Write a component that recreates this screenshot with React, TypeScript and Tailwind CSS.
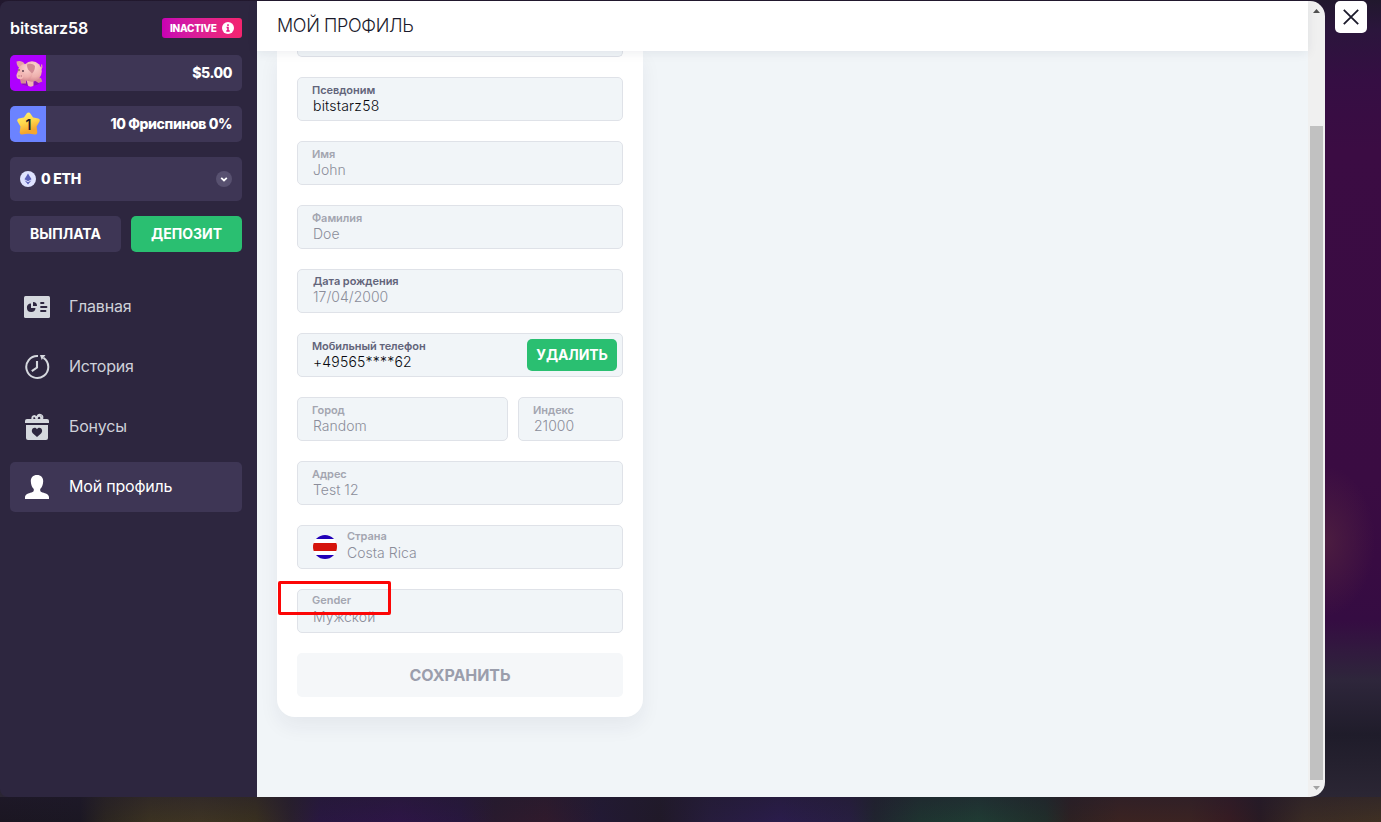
import type { ReactNode } from 'react';

function PiggyIcon() {
  return (
    <svg viewBox="0 0 36 36" className="size-9 shrink-0">
      <defs>
        <radialGradient id="pig" cx="60%" cy="25%" r="85%">
          <stop offset="0" stopColor="#fbd3cf" />
          <stop offset="0.6" stopColor="#eeb0ad" />
          <stop offset="1" stopColor="#c97784" />
        </radialGradient>
      </defs>
      <rect width="36" height="36" fill="#ae00ff" />
      <path d="M30 14c2-.5 2.200-2 1.500-4.500" stroke="#e89fa6" strokeWidth="1.200" fill="none" />
      <ellipse cx="20" cy="28" rx="9" ry="3" fill="#8d10bd" />
      <path d="M10 24h6v4.500h-5zM26 22l5 1 1.300 3.500-3.800 1.500-3-2z" fill="#d68c93" />
      <path d="M16.500 25h7v5.500c-1 1.500-4.500 1.500-5.500 0z" fill="#f0b4b2" />
      <path d="M6.500 6.500c3-1.500 6.500 0 8 2l-3 5.500c-3-1-5-3.500-5-7.500z" fill="#e6a0a6" />
      <ellipse cx="22" cy="16.500" rx="9.800" ry="10.200" fill="url(#pig)" />
      <ellipse cx="15" cy="17.500" rx="7.500" ry="8.500" fill="url(#pig)" />
      <path d="M17 9.500c3-1.500 6.500-.5 8 1.500 0 3-1 6-3 7.500-2.500-3-5-3.500-5-9z" fill="#d08b93" />
      <ellipse cx="10" cy="20.500" rx="3.500" ry="3.800" fill="#f3b7b5" />
      <circle cx="9" cy="21" r=".7" fill="#b5707c" />
      <circle cx="11.300" cy="21" r=".7" fill="#b5707c" />
      <circle cx="13" cy="16" r=".9" fill="#503445" />
      <circle cx="9" cy="15" r=".8" fill="#503445" />
    </svg>
  );
}

function StarIcon() {
  return (
    <svg viewBox="0 0 36 36" className="size-9 shrink-0">
      <defs>
        <linearGradient id="star" x1="0" y1="0" x2="0.300" y2="1">
          <stop offset="0" stopColor="#ffed66" />
          <stop offset="0.500" stopColor="#ffd84c" />
          <stop offset="1" stopColor="#f5a62c" />
        </linearGradient>
      </defs>
      <rect width="36" height="36" fill="#6b83ff" />
      <path
        d="M18.500 8.500l3.300 4.700 6 1.300-3.300 5.500.8 6.500-6.800-1-6.800 1 .8-6.500-3.300-5.500 6-1.300z"
        fill="url(#star)"
        stroke="url(#star)"
        strokeWidth="4"
        strokeLinejoin="round"
      />
      <text x="18.500" y="24" textAnchor="middle" fontSize="14" fontWeight="600" fill="#1b1b2b" fontFamily="Inter, sans-serif">
        1
      </text>
    </svg>
  );
}

function DashboardIcon() {
  return (
    <svg viewBox="0 0 26 22" className="h-[22px] w-[26px]">
      <rect width="26" height="22" rx="1.500" fill="#d5d8de" />
      <path d="M7 7.500v4.500h4.500A4.300 4.300 0 1 1 7 7.500z" fill="#2d263f" />
      <path d="M9 6a4 4 0 0 1 4 4H9z" fill="#2d263f" />
      <path d="M17 7h2.500M17 11h5.500M17 15h4.500" stroke="#2d263f" strokeWidth="1.800" strokeLinecap="round" />
    </svg>
  );
}

function HistoryIcon() {
  return (
    <svg viewBox="0 0 26 26" className="size-[26px]" fill="none" stroke="#d5d8de" strokeWidth="2">
      <path d="M14 2a11 11 0 1 0 5.500 1.900" />
      <path d="M13 7v6.500L7.800 17.200" strokeWidth="2.100" />
      <path d="M16 1h5.500l-3.800 5z" fill="#d5d8de" stroke="none" />
    </svg>
  );
}

function BonusIcon() {
  return (
    <svg viewBox="0 0 26 28" className="h-7 w-[26px]">
      <path d="M8.500 7c-1-5 3-5 4-1 1-5 6-4 4.500 1" fill="none" stroke="#d5d8de" strokeWidth="2" />
      <path d="M13 6c-1-4 2-5.500 4.500-4 1.500 1 1.500 3 .5 5" fill="none" stroke="#d5d8de" strokeWidth="1.300" />
      <path d="M3 6h20q2 0 2 2v2H1V8q0-2 2-2z" fill="#d5d8de" />
      <path d="M2 12h22V25q0 2-2 2H4q-2 0-2-2z" fill="#d5d8de" />
      <path d="M13 24l-4-3.500c-3.300-3.500 1.200-8 4-4.300 2.800-3.700 7.300.8 4 4.300z" fill="#2d263f" />
    </svg>
  );
}

function ProfileIcon() {
  return (
    <svg viewBox="0 0 26 26" className="size-[26px]" fill="#fff">
      <path d="M13 1c4 0 6.300 2.600 6.200 6.300-.1 3.700-1.400 6.200-3 7.700-.2 2.200.5 3 2.300 3.600 3.300 1 6 1.600 6.500 4.400v2H1v-2c.5-2.800 3.200-3.400 6.500-4.400 1.800-.6 2.500-1.400 2.300-3.600-1.600-1.500-2.900-4-3-7.700C6.700 3.600 9 1 13 1z" />
    </svg>
  );
}

function NavItem({ icon, label, active }: { icon: ReactNode; label: string; active?: boolean }) {
  return (
    <a
      className={`flex h-[50px] items-center rounded-[5px] pl-3.5 text-base tracking-[-0.2px] ${
        active ? 'bg-[#3e3655] text-white' : 'text-[#cfd1d9]'
      }`}
    >
      <span className="flex w-[45px] items-center">{icon}</span>
      <span className="pb-0.5">{label}</span>
    </a>
  );
}

function Sidebar() {
  return (
    <aside className="flex w-[257px] shrink-0 flex-col rounded-l-[8px] bg-[#2d263f] pt-4 pr-[15px] pl-2.5 text-white">
      <div className="flex h-[22px] items-center justify-between">
        <span className="text-base font-semibold tracking-[-0.1px]">bitstarz58</span>
        <span className="flex h-5 w-20 items-center gap-[5px] rounded-[3px] bg-linear-to-r from-[#c800b4] to-[#f4246e] pl-2 text-[10px] font-extrabold tracking-[-0.25px]">
          INACTIVE
          <svg viewBox="0 0 12 12" className="size-3">
            <circle cx="6" cy="6" r="6" fill="#fff" />
            <path d="M6 2.200v1.800M4.600 5.500H6V9M4.300 9h3.400" stroke="#e8107f" strokeWidth="1.500" fill="none" />
          </svg>
        </span>
      </div>
      <div className="mt-4 flex h-9 items-center justify-between overflow-hidden rounded-[5px] bg-[#3e3655] pr-2.5">
        <PiggyIcon />
        <span className="text-sm font-extrabold tracking-[-0.45px]">$5.00</span>
      </div>
      <div className="mt-[15px] flex h-9 items-center justify-between overflow-hidden rounded-[5px] bg-[#3e3655] pr-2.5">
        <StarIcon />
        <span className="text-sm font-extrabold tracking-[-0.38px]">10 Фриспинов 0%</span>
      </div>
      <div className="mt-[15px] flex h-11 items-center rounded-[5px] bg-[#3e3655] px-2.5">
        <svg viewBox="0 0 16 16" className="size-4">
          <circle cx="8" cy="8" r="8" fill="#dfe3ff" />
          <path d="M8 2.500l3.500 5.700L8 10.200 4.500 8.200z" fill="#5a5fb8" />
          <path d="M8 13.500L4.500 9.200 8 11.200l3.500-2z" fill="#5a5fb8" />
        </svg>
        <span className="ml-[5px] text-sm font-extrabold tracking-[-0.25px]">0 ETH</span>
        <svg viewBox="0 0 16 16" className="ml-auto size-4">
          <circle cx="8" cy="8" r="8" fill="#585170" />
          <path d="M5.200 6.800L8 9.400l2.800-2.600" fill="none" stroke="#fff" strokeWidth="1.800" />
        </svg>
      </div>
      <div className="mt-[15px] grid grid-cols-2 gap-2.5 text-sm font-bold">
        <button className="h-9 rounded-[5px] bg-[#3e3655]">ВЫПЛАТА</button>
        <button className="h-9 rounded-[5px] bg-[#2abf71]">ДЕПОЗИТ</button>
      </div>
      <nav className="mt-[30px] flex flex-col gap-2.5">
        <NavItem icon={<DashboardIcon />} label="Главная" />
        <NavItem icon={<HistoryIcon />} label="История" />
        <NavItem icon={<BonusIcon />} label="Бонусы" />
        <NavItem icon={<ProfileIcon />} label="Мой профиль" active />
      </nav>
    </aside>
  );
}

type FieldProps = {
  label: string;
  value: string;
  filled?: boolean;
  darkLabel?: boolean;
  lead?: ReactNode;
  action?: ReactNode;
  className?: string;
};

function Field({ label, value, filled, darkLabel, lead, action, className = '' }: FieldProps) {
  return (
    <div className={`flex h-11 items-start rounded-[5px] border border-[#dfe2e8] bg-[#f1f5f8] pl-3.5 ${className}`}>
      {lead}
      <div className={lead ? 'pt-[3px]' : darkLabel ? 'pt-1' : 'pt-[5px]'}>
        <div
          className={`text-[11px] leading-[14px] font-semibold tracking-[-0.05px] ${
            filled || darkLabel ? 'text-[#62647a]' : 'text-[#a3a5b0]'
          } ${darkLabel ? 'pl-px' : ''}`}
        >
          {label}
        </div>
        <div
          className={`text-sm leading-[18px] font-light ${lead ? 'mt-px' : 'pl-px'} ${
            filled ? 'tracking-[0.2px] text-[#08090f]' : 'tracking-[0.02px] text-[#8b8d9a]'
          }`}
        >
          {value}
        </div>
      </div>
      {action}
    </div>
  );
}

function GenderField() {
  return (
    <div className="h-11 rounded-[5px] border border-[#dfe2e8] bg-[#f1f5f8] pt-[3px] pl-3.5">
      <div className="text-[11px] leading-[14px] font-semibold text-[#a3a5b0]">Gender</div>
      <div className="mt-px pl-px text-sm leading-[17px] font-light text-[#8b8d9a]">Мужской</div>
    </div>
  );
}

function CostaRicaFlag() {
  return (
    <svg viewBox="0 0 24 24" className="mt-[9px] mr-2.5 ml-px size-6 shrink-0">
      <clipPath id="flag">
        <circle cx="12" cy="12" r="12" />
      </clipPath>
      <g clipPath="url(#flag)">
        <rect width="24" height="24" fill="#fff" />
        <rect width="24" height="4" fill="#2100b8" />
        <rect y="8" width="24" height="8" fill="#d5140c" />
        <rect y="20" width="24" height="4" fill="#2100b8" />
      </g>
    </svg>
  );
}

function ProfileForm() {
  return (
    <section className="flex w-[366px] flex-col gap-5 rounded-b-[18px] bg-white px-5 pb-5 shadow-[0_10px_20px_rgba(30,40,60,0.06)]">
      <div className="-mb-px h-1.5 rounded-b-[5px] border border-t-0 border-[#dfe2e8] bg-[#f1f5f8]" />
      <Field label="Псевдоним" value="bitstarz58" filled className="mt-px" />
      <Field label="Имя" value="John" />
      <Field label="Фамилия" value="Doe" />
      <Field label="Дата рождения" value="17/04/2000" darkLabel />
      <Field
        label="Мобильный телефон"
        value="+49565****62"
        filled
        action={
          <button className="mt-[5px] mr-[5px] ml-auto h-8 w-[90px] rounded-[5px] bg-[#2abf71] text-sm font-bold tracking-[-0.1px] text-white">
            УДАЛИТЬ
          </button>
        }
      />
      <div className="flex gap-2.5">
        <Field label="Город" value="Random" className="w-[211px]" />
        <Field label="Индекс" value="21000" className="w-[105px]" />
      </div>
      <Field label="Адрес" value="Test 12" />
      <Field label="Страна" value="Costa Rica" lead={<CostaRicaFlag />} />
      <GenderField />
      <button className="h-11 rounded-[5px] bg-[#f5f7f9] text-base font-bold tracking-[-0.05px] text-[#9b9eac]">
        СОХРАНИТЬ
      </button>
    </section>
  );
}

function Scrollbar() {
  return (
    <div className="flex w-[17px] shrink-0 flex-col items-center bg-[#f0f0f0]">
      <svg viewBox="0 0 7 4" className="mt-2 h-1 w-[7px]">
        <path d="M0 4L3.500 0 7 4z" fill="#505050" />
      </svg>
      <div className="mt-[113px] h-[654px] w-[13px] bg-[#c1c1c1]" />
      <svg viewBox="0 0 7 4" className="mt-1.5 h-1 w-[7px]">
        <path d="M0 0h7L3.500 4z" fill="#a3a3a3" />
      </svg>
    </div>
  );
}

export default function App() {
  return (
    <div className="flex h-[822px] w-[1381px] flex-col overflow-hidden bg-[#22152f] font-[Inter,sans-serif]">
      <div className="flex h-[797px] items-start bg-[radial-gradient(ellipse_50px_75px_at_1325px_541px,#4c1d40_0,transparent_100%),linear-gradient(180deg,#21182d_0,#2b153c_30px,#350e43_80px,#3b0c43_150px,#3a0c42_480px,#380b42_560px,#350c42_620px,#2e263b_680px,#1f1c2a_735px,#2b2634_797px)] pt-px">
        <main className="relative flex h-[796px] w-[1325px] overflow-hidden rounded-r-[15px]">
          <Sidebar />
          <div className="flex min-w-0 grow flex-col bg-[#f1f5f8]">
            <header className="z-10 flex h-[50px] shrink-0 items-center bg-white pl-5 text-lg font-light tracking-[-0.37px] text-[#1b1a2b] shadow-[0_2px_10px_rgba(30,40,60,0.08)]">
              МОЙ ПРОФИЛЬ
            </header>
            <div className="grow pl-5">
              <ProfileForm />
            </div>
          </div>
          <Scrollbar />
          <div className="absolute top-[580px] left-[278px] z-20 h-[34px] w-[113px] rounded-[2px] border-3 border-[#fc0606]" />
        </main>
        <button className="ml-2.5 flex size-8 items-center justify-center rounded-[5px] bg-white">
          <svg viewBox="0 0 16 16" className="size-4" stroke="#1b1a2b" strokeWidth="1.800">
            <path d="M.8.800l14.400 14.400M15.200.800L.8 15.200" />
          </svg>
        </button>
      </div>
      <div className="h-[25px] bg-[linear-gradient(180deg,rgba(33,27,46,0.4),transparent),linear-gradient(90deg,#1b1622_0,#1b1723_80px,#2b2520_105px,#3b3221_150px,#3e3423_200px,#39301f_255px,#2a202c_290px,#291741_320px,#2d1546_400px,#28173e_460px,#291a2e_495px,#301a2c_545px,#221934_600px,#201928_660px,#261c3c_710px,#2a1c4b_780px,#271e40_850px,#20242f_875px,#1e3430_920px,#1f3b33_980px,#202e2a_1045px,#2d2122_1070px,#3b2321_1120px,#3b2322_1190px,#361b22_1230px,#281a23_1260px,#3a2b24_1305px,#3f3023_1381px)]" />
    </div>
  );
}
